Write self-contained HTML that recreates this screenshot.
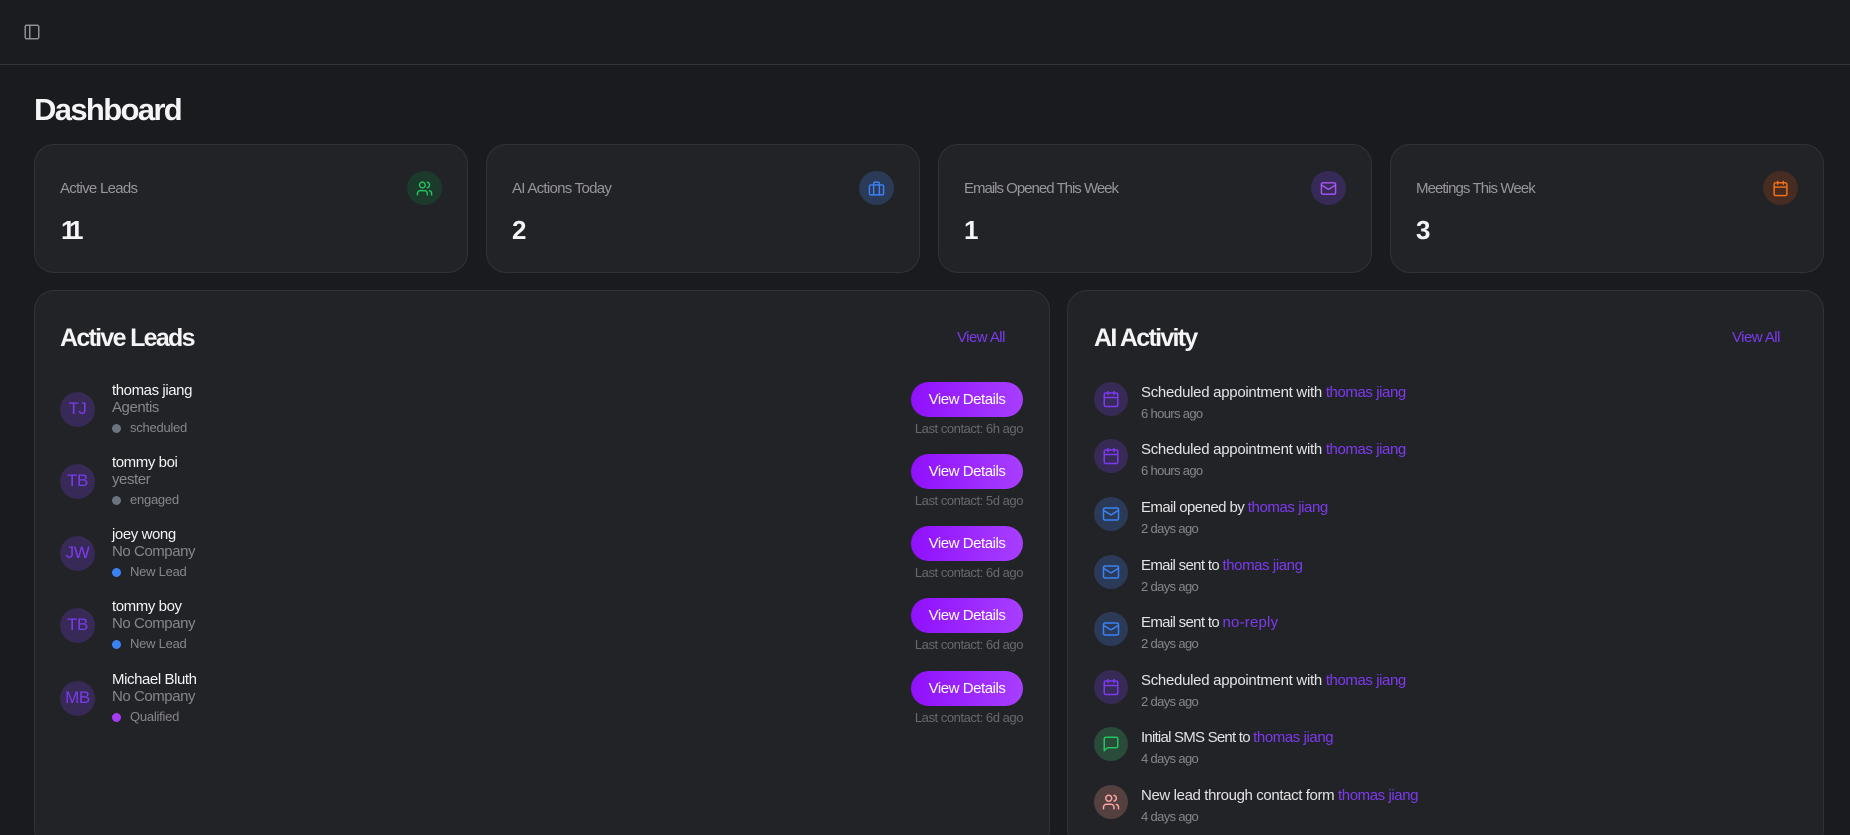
<!DOCTYPE html>
<html lang="en"><head><meta charset="utf-8"><title>Dashboard</title>
<style>
html,body{margin:0;padding:0;width:1850px;height:835px;overflow:hidden;background:#1a1b1f;font-family:"Liberation Sans",sans-serif;color:#fff}
#wrap{position:relative;width:1850px;height:835px;overflow:hidden;background:#1a1b1f}
.abs,.t{position:absolute}
.t{white-space:nowrap;line-height:20px;height:20px}
#hdr{position:absolute;left:0;top:0;width:1850px;height:64px;border-bottom:1px solid #333438;background:#1b1c20}
h1{position:absolute;margin:0;left:34px;top:91px;font-size:31px;line-height:38px;font-weight:700;letter-spacing:-1.65px;color:#f5f5f7}
.card{position:absolute;top:144px;width:434px;height:129px;background:#222327;border:1px solid #313237;border-radius:20px;box-sizing:border-box}
.card .l{left:25px;top:34px;font-size:15px;letter-spacing:-.72px;color:#96969c}
.card .n{left:25px;top:72px;font-size:26px;line-height:26px;height:26px;font-weight:700;color:#f5f5f7}
.ci{position:absolute;width:34px;height:34px;border-radius:50%;display:flex;align-items:center;justify-content:center}
.card .ci{left:372px;top:26px;width:35px}
.panel{position:absolute;top:290px;height:560px;background:#222327;border:1px solid #313237;border-radius:20px;box-sizing:border-box}
.h2{font-size:25px;font-weight:700;letter-spacing:-1.7px;line-height:30px;height:30px;color:#f5f5f7}
.va{font-size:15px;letter-spacing:-.55px;color:#7c3aed}
svg{fill:none;stroke:currentColor;stroke-width:2;stroke-linecap:round;stroke-linejoin:round;display:block}
.row{position:absolute;left:0;width:0;height:0}
.av{position:absolute;left:60px;top:-17.5px;width:35px;height:35px;border-radius:50%;background:#382a56;color:#7c3aed;font-size:17px;letter-spacing:-.4px;line-height:33px;text-align:center}
.nm{left:112px;top:-28px;font-size:15px;letter-spacing:-.42px;color:#f5f5f7}
.co{left:112px;top:-11px;font-size:15px;letter-spacing:-.45px;color:#86868c}
.dot{position:absolute;left:112px;top:15px;width:9px;height:9px;border-radius:50%}
.st{left:130px;top:9px;font-size:13px;letter-spacing:-.25px;color:#86868c}
.btn{position:absolute;left:911px;top:-27px;width:112px;height:35px;border-radius:18px;background:linear-gradient(90deg,#9010fc,#a83eff);color:#fff;font-size:15px;letter-spacing:-.45px;line-height:35px;text-align:center}
.lc{left:0;width:1023px;text-align:right;top:10px;font-size:13px;letter-spacing:-.45px;color:#68686e}
.ar{position:absolute;left:0;width:0;height:0}
.ar .ci{left:1094px;top:-17px}
.ti{left:1141px;top:-16px;font-size:15px;letter-spacing:-.42px;color:#e4e4e7}
.ti b{font-weight:400;color:#7c3aed;letter-spacing:-.42px}
.tm{left:1141px;top:5px;font-size:13px;letter-spacing:-.65px;color:#86868c}
</style></head><body>
<div id="wrap">
<svg width="0" height="0" style="position:absolute">
<symbol id="users" viewBox="0 0 24 24"><path d="M16 21v-2a4 4 0 0 0-4-4H6a4 4 0 0 0-4 4v2"/><circle cx="9" cy="7" r="4"/><path d="M22 21v-2a4 4 0 0 0-3-3.87"/><path d="M16 3.13a4 4 0 0 1 0 7.75"/></symbol>
<symbol id="brief" viewBox="0 0 24 24"><rect x="2" y="7" width="20" height="14" rx="2"/><path d="M16 21V5a2 2 0 0 0-2-2h-4a2 2 0 0 0-2 2v16"/></symbol>
<symbol id="mail" viewBox="0 0 24 24"><rect x="2" y="4" width="20" height="16" rx="2"/><path d="m22 7-8.97 5.7a1.94 1.94 0 0 1-2.06 0L2 7"/></symbol>
<symbol id="cal" viewBox="0 0 24 24"><path d="M8 2v4"/><path d="M16 2v4"/><rect x="3" y="4" width="18" height="18" rx="2"/><path d="M3 10h18"/></symbol>
<symbol id="msg" viewBox="0 0 24 24"><path d="M21 15a2 2 0 0 1-2 2H7l-4 4V5a2 2 0 0 1 2-2h14a2 2 0 0 1 2 2z"/></symbol>
</svg>
<div id="hdr"></div>
<svg class="abs" style="left:23px;top:23px;color:#8e8e94" width="18" height="18" viewBox="0 0 24 24"><rect x="3" y="3" width="18" height="18" rx="2"/><path d="M9 3v18"/></svg>
<h1>Dashboard</h1>

<div class="card" style="left:34px"><div class="t l">Active Leads</div><div class="t n" style="letter-spacing:-5px;left:26px">11</div><div class="ci" style="background:#1c3a2b;color:#22c55e"><svg width="17" height="17"><use href="#users"/></svg></div></div>
<div class="card" style="left:486px"><div class="t l">AI Actions Today</div><div class="t n">2</div><div class="ci" style="background:#2b3a57;color:#3b82f6"><svg width="17" height="17"><use href="#brief"/></svg></div></div>
<div class="card" style="left:938px"><div class="t l" style="letter-spacing:-1px">Emails Opened This Week</div><div class="t n">1</div><div class="ci" style="background:#382a56;color:#a855f7"><svg width="17" height="17"><use href="#mail"/></svg></div></div>
<div class="card" style="left:1390px"><div class="t l" style="letter-spacing:-.92px">Meetings This Week</div><div class="t n">3</div><div class="ci" style="background:#472c22;color:#f97316"><svg width="17" height="17"><use href="#cal"/></svg></div></div>

<div class="panel" style="left:34px;width:1016px"></div>
<div class="panel" style="left:1067px;width:757px"></div>

<div class="t h2" style="left:60px;top:323px">Active Leads</div>
<div class="t va" style="left:957px;top:328px">View All</div>
<div class="t h2" style="left:1094px;top:323px">AI Activity</div>
<div class="t va" style="left:1732px;top:328px">View All</div>

<div class="row" style="top:409px"><div class="av">TJ</div><div class="t nm">thomas jiang</div><div class="t co">Agentis</div><div class="dot" style="background:#6b7280"></div><div class="t st">scheduled</div><div class="btn">View Details</div><div class="t lc">Last contact: 6h ago</div></div>
<div class="row" style="top:481px"><div class="av">TB</div><div class="t nm">tommy boi</div><div class="t co">yester</div><div class="dot" style="background:#6b7280"></div><div class="t st">engaged</div><div class="btn">View Details</div><div class="t lc">Last contact: 5d ago</div></div>
<div class="row" style="top:553px"><div class="av">JW</div><div class="t nm">joey wong</div><div class="t co">No Company</div><div class="dot" style="background:#3b82f6"></div><div class="t st">New Lead</div><div class="btn">View Details</div><div class="t lc">Last contact: 6d ago</div></div>
<div class="row" style="top:625px"><div class="av">TB</div><div class="t nm">tommy boy</div><div class="t co">No Company</div><div class="dot" style="background:#3b82f6"></div><div class="t st">New Lead</div><div class="btn">View Details</div><div class="t lc">Last contact: 6d ago</div></div>
<div class="row" style="top:698px"><div class="av">MB</div><div class="t nm">Michael Bluth</div><div class="t co">No Company</div><div class="dot" style="background:#a83cf5"></div><div class="t st">Qualified</div><div class="btn">View Details</div><div class="t lc">Last contact: 6d ago</div></div>

<div class="ar" style="top:399px"><div class="ci" style="background:#382a56;color:#7c3aed"><svg width="18" height="18"><use href="#cal"/></svg></div><div class="t ti" style="letter-spacing:-.29px">Scheduled appointment with <b>thomas jiang</b></div><div class="t tm">6 hours ago</div></div>
<div class="ar" style="top:456px"><div class="ci" style="background:#382a56;color:#7c3aed"><svg width="18" height="18"><use href="#cal"/></svg></div><div class="t ti" style="letter-spacing:-.29px">Scheduled appointment with <b>thomas jiang</b></div><div class="t tm">6 hours ago</div></div>
<div class="ar" style="top:514px"><div class="ci" style="background:#2b3a57;color:#3b82f6"><svg width="18" height="18"><use href="#mail"/></svg></div><div class="t ti" style="letter-spacing:-.57px">Email opened by <b>thomas jiang</b></div><div class="t tm">2 days ago</div></div>
<div class="ar" style="top:572px"><div class="ci" style="background:#2b3a57;color:#3b82f6"><svg width="18" height="18"><use href="#mail"/></svg></div><div class="t ti" style="letter-spacing:-.67px">Email sent to <b>thomas jiang</b></div><div class="t tm">2 days ago</div></div>
<div class="ar" style="top:629px"><div class="ci" style="background:#2b3a57;color:#3b82f6"><svg width="18" height="18"><use href="#mail"/></svg></div><div class="t ti" style="letter-spacing:-.67px">Email sent to <b style="letter-spacing:.2px">no-reply</b></div><div class="t tm">2 days ago</div></div>
<div class="ar" style="top:687px"><div class="ci" style="background:#382a56;color:#7c3aed"><svg width="18" height="18"><use href="#cal"/></svg></div><div class="t ti" style="letter-spacing:-.29px">Scheduled appointment with <b>thomas jiang</b></div><div class="t tm">2 days ago</div></div>
<div class="ar" style="top:744px"><div class="ci" style="background:#2a4a3a;color:#22c55e"><svg width="18" height="18"><use href="#msg"/></svg></div><div class="t ti" style="letter-spacing:-.77px">Initial SMS Sent to <b>thomas jiang</b></div><div class="t tm">4 days ago</div></div>
<div class="ar" style="top:802px"><div class="ci" style="background:#54403f;color:#fca5a5"><svg width="18" height="18"><use href="#users"/></svg></div><div class="t ti" style="letter-spacing:-.38px">New lead through contact form <b>thomas jiang</b></div><div class="t tm">4 days ago</div></div>
</div>
</body></html>
